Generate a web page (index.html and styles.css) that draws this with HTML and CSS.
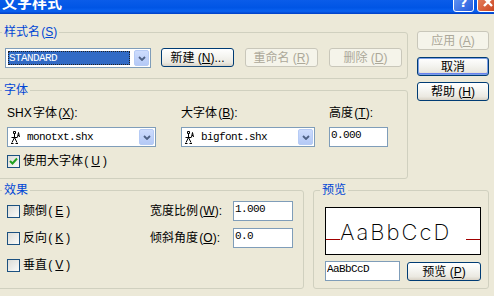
FILE: index.html
```html
<!DOCTYPE html>
<html>
    <head>
        <meta charset="utf-8">
        <title>文字样式</title>
        <link rel="stylesheet" href="styles.css">
    </head>
    <body>
        <div class="titlebar">
            <span class="title">文字样式</span>
            <div class="caption-btns">
                <span class="cap-btn cap-help">?</span>
                <span class="cap-btn cap-close">
                    <svg width="10" height="10" viewBox="0 0 10 10"><path d="M1 1 L9 9 M9 1 L1 9" stroke="#fff" stroke-width="2.4"/></svg>
                </span>
            </div>
        </div>

        <div class="top">
            <div class="main">
                <fieldset class="group">
                    <legend>样式名 (<u>S</u>)</legend>
                    <div class="style-row">
                        <div class="combo combo-style">
                            <span class="combo-value selected mono">STANDARD</span>
                            <span class="drop"><svg width="8" height="5" viewBox="0 0 8 5"><path d="M1 1 L4 4 L7 1" stroke="#4d6185" stroke-width="1.8" fill="none"/></svg></span>
                        </div>
                        <button class="btn">新建 (<u>N</u>)...</button>
                        <button class="btn" disabled>重命名 (<u>R</u>)</button>
                        <button class="btn" disabled>删除 (<u>D</u>)</button>
                    </div>
                </fieldset>

                <fieldset class="group group-font">
                    <legend>字体</legend>
                    <div class="font-grid">
                        <span>SHX 字体 (<u>X</u>):</span>
                        <span>大字体 (<u>B</u>):</span>
                        <span>高度 (<u>T</u>):</span>
                        <div class="combo combo-shx">
                            <svg class="shx-icon" width="10" height="13" viewBox="0 0 10 13"><path d="M2.5 0.5 H4.5 V2.5 H2.5 Z M3.5 2.5 V6 M0.5 6.5 H6.5 M3.5 6.5 L1 11.5 M3.5 6.5 L6 11.5 M0 12.5 H2.5 M4.5 12.5 H7 M6.5 6 L7.5 1.5 L8.5 6 M7 4.5 H8" stroke="#000" fill="none"/></svg>
                            <span class="combo-value mono">monotxt.shx</span>
                            <span class="drop"><svg width="8" height="5" viewBox="0 0 8 5"><path d="M1 1 L4 4 L7 1" stroke="#4d6185" stroke-width="1.8" fill="none"/></svg></span>
                        </div>
                        <div class="combo combo-big">
                            <svg class="shx-icon" width="10" height="13" viewBox="0 0 10 13"><path d="M2.5 0.5 H4.5 V2.5 H2.5 Z M3.5 2.5 V6 M0.5 6.5 H6.5 M3.5 6.5 L1 11.5 M3.5 6.5 L6 11.5 M0 12.5 H2.5 M4.5 12.5 H7 M6.5 6 L7.5 1.5 L8.5 6 M7 4.5 H8" stroke="#000" fill="none"/></svg>
                            <span class="combo-value mono">bigfont.shx</span>
                            <span class="drop"><svg width="8" height="5" viewBox="0 0 8 5"><path d="M1 1 L4 4 L7 1" stroke="#4d6185" stroke-width="1.8" fill="none"/></svg></span>
                        </div>
                        <input class="field mono" type="text" value="0.000">
                        <label class="chk-label chk-wide">
                            <span class="check"><svg width="9" height="9" viewBox="0 0 9 9"><path d="M1 4 L3.5 6.5 L8 1.5" stroke="#21a121" stroke-width="2" fill="none"/></svg></span>
                            使用大字体 (<u>U</u>)
                        </label>
                    </div>
                </fieldset>
            </div>

            <div class="side">
                <button class="btn btn-apply" disabled>应用 (<u>A</u>)</button>
                <button class="btn btn-default">取消</button>
                <button class="btn">帮助 (<u>H</u>)</button>
            </div>
        </div>

        <div class="bottom">
            <fieldset class="group group-effect">
                <legend>效果</legend>
                <div class="effect-grid">
                    <label class="chk-label"><span class="check"></span>颠倒 (<u>E</u>)</label>
                    <span>宽度比例 (<u>W</u>):</span>
                    <input class="field mono" type="text" value="1.000">
                    <label class="chk-label"><span class="check"></span>反向 (<u>K</u>)</label>
                    <span>倾斜角度 (<u>O</u>):</span>
                    <input class="field mono" type="text" value="0.0">
                    <label class="chk-label chk-last"><span class="check"></span>垂直 (<u>V</u>)</label>
                </div>
            </fieldset>

            <fieldset class="group group-preview">
                <legend>预览</legend>
                <div class="preview-body">
                    <div class="preview-box">
                        <span class="baseline"></span>
                        <span class="preview-text">AaBbCcD</span>
                        <span class="baseline baseline-end"></span>
                    </div>
                    <div class="sample-row">
                        <input class="field mono sample-input" type="text" value="AaBbCcD">
                        <button class="btn">预览 (<u>P</u>)</button>
                    </div>
                </div>
            </fieldset>
        </div>
    </body>
</html>
```

FILE: styles.css
```css
*{
    box-sizing: border-box;
}
html, body{
    margin: 0;
    padding: 0;
}
body{
    width: 494px;
    height: 296px;
    overflow: hidden;
    background: #ECE9D8;
    font-family: "Liberation Sans", "Noto Sans CJK SC", sans-serif;
    font-size: 12px;
    line-height: 14px;
    color: #000;
    word-spacing: -2px;
}
u{
    text-decoration: underline;
    text-underline-offset: 1px;
}
.mono{
    font-family: "Liberation Mono", "Noto Sans CJK SC", monospace;
    font-size: 11px;
    letter-spacing: -0.6px;
    word-spacing: 0;
}

/* title bar */
.titlebar{
    height: 14px;
    display: flex;
    justify-content: space-between;
    align-items: flex-start;
    overflow: hidden;
    background: linear-gradient(#0a5ce9, #0055e5 55%, #0a62f0 80%, #003fc4);
}
.title{
    margin: -6px 0 0 2px;
    font-family: "Noto Sans CJK SC", sans-serif;
    font-size: 15px;
    line-height: 16px;
    font-weight: bold;
    color: #fff;
}
.caption-btns{
    display: flex;
    gap: 3px;
    margin: -9px -4px 0 0;
}
.cap-btn{
    width: 21px;
    height: 21px;
    border: 1px solid #fff;
    border-radius: 3px;
    display: flex;
    align-items: flex-end;
    justify-content: center;
    padding-bottom: 2px;
    color: #fff;
    font: bold 13px/13px "DejaVu Sans", sans-serif;
}
.cap-help{
    background: linear-gradient(135deg, #6b9ff7, #2459dc);
}
.cap-close{
    background: linear-gradient(135deg, #ec8c6c, #c8401a);
    padding-bottom: 4px;
}

/* layout */
.top{
    display: flex;
    align-items: flex-start;
    margin: 11px 0 0 -3px;
}
.main{
    width: 411px;
}
.side{
    width: 72px;
    margin-left: 9px;
    padding-top: 6px;
    display: flex;
    flex-direction: column;
    gap: 6px;
}
.btn-apply{
    margin-bottom: 1px;
}
.bottom{
    display: flex;
    align-items: flex-start;
    margin: 4px 0 0 -3px;
}

/* group boxes */
.group{
    margin: 0;
    padding: 0;
    min-width: 0;
    border: 1px solid #D0D0BF;
    border-radius: 3px;
}
.group legend{
    margin-left: 4px;
    padding: 0 2px;
    color: #0046D5;
    line-height: 14px;
}
.group-font{
    margin-top: 4px;
}
.group-effect{
    width: 307px;
}
.group-preview{
    width: 176px;
    margin-left: 9px;
}
.group-preview legend{
    margin-left: 6px;
}

/* controls */
.btn{
    height: 19px;
    padding: 0;
    border: 1px solid #003C74;
    border-radius: 3px;
    background: linear-gradient(#ffffff, #f4f4f0 45%, #ebe9e1 80%, #d8d2c6);
    font: inherit;
    color: #000;
    display: flex;
    align-items: center;
    justify-content: center;
    white-space: nowrap;
}
.btn:disabled{
    border-color: #C9C7BA;
    background: #F5F4EA;
    color: #ACA899;
}
.btn-default{
    box-shadow: inset 0 0 0 1px #7c9fe6, inset 0 -1px 0 1px #6982ee;
}
.combo{
    height: 20px;
    display: flex;
    align-items: center;
    padding: 1px;
    border: 1px solid #7F9DB9;
    background: #fff;
}
.combo-value{
    flex: 1;
    line-height: 14px;
    white-space: nowrap;
    overflow: hidden;
}
.selected{
    margin: 0 4px 0 1px;
    background: #316AC5;
    color: #fff;
    border: 1px dotted #222;
    line-height: 12px;
}
.drop{
    flex: none;
    width: 15px;
    height: 16px;
    border: 1px solid #b6cbf5;
    border-radius: 2px;
    background: linear-gradient(#cddcfd, #b4c9f6);
    display: flex;
    align-items: center;
    justify-content: center;
}
.shx-icon{
    flex: none;
    margin: 0 6px 0 2px;
}
.field{
    height: 20px;
    margin: 0;
    padding: 0 0 4px 1px;
    border: 1px solid #7F9DB9;
    background: #fff;
    color: #000;
    line-height: 14px;
    outline: none;
}
.chk-label{
    display: flex;
    align-items: center;
    gap: 3px;
    white-space: nowrap;
}
.check{
    flex: none;
    width: 13px;
    height: 13px;
    border: 1px solid #1C5180;
    background: linear-gradient(135deg, #dcdcd7, #fbfbf9);
    display: flex;
    align-items: center;
    justify-content: center;
}

/* style name row */
.style-row{
    display: flex;
    align-items: flex-start;
    padding: 9px 0 10px 7px;
}
.combo-style{
    width: 146px;
    margin-right: 10px;
}
.style-row .btn{
    width: 73px;
}
.style-row .btn + .btn{
    margin-left: 11px;
}

/* font group */
.font-grid{
    display: grid;
    grid-template-columns: 174px 148px 59px;
    grid-template-rows: 14px 20px 14px;
    row-gap: 7px;
    padding: 9px 0 10px 9px;
}
.combo-shx{
    width: 149px;
}
.combo-big{
    width: 134px;
}
.font-grid .field{
    width: 59px;
}
.chk-wide{
    grid-column: 1 / -1;
}

/* effect group */
.effect-grid{
    display: grid;
    grid-template-columns: 1fr auto 60px;
    grid-template-rows: 20px 20px 17px;
    column-gap: 11px;
    row-gap: 7px;
    align-items: center;
    padding: 4px 10px 16px 9px;
}
.effect-grid .field{
    width: 60px;
}
.chk-last{
    align-self: end;
}

/* preview group */
.preview-body{
    padding: 10px 7px 7px 11px;
}
.preview-box{
    height: 48px;
    display: flex;
    align-items: baseline;
    padding-top: 13px;
    border: 1px solid #000;
    background: #fff;
}
.baseline{
    flex: none;
    width: 14px;
    height: 1px;
    background: #a00000;
}
.baseline-end{
    margin-left: auto;
}
.preview-text{
    font-family: Inter, "Liberation Sans", sans-serif;
    font-weight: 200;
    font-size: 22px;
    line-height: 22px;
    letter-spacing: 2px;
}
.sample-row{
    display: flex;
    align-items: flex-end;
    margin-top: 6px;
}
.sample-input{
    width: 75px;
}
.sample-row .btn{
    width: 74px;
    margin-left: 7px;
}
```
